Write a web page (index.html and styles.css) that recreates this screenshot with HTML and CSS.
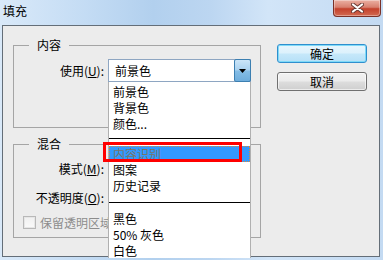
FILE: index.html
```html
<!DOCTYPE html>
<html lang="zh-CN">
<head>
<meta charset="utf-8">
<title>填充</title>
<link rel="stylesheet" href="styles.css">
</head>
<body>
<div class="window">
  <div class="titlebar">
    <span class="title">填充</span>
    <button class="close" aria-label="关闭">
      <svg width="13" height="10" viewBox="0 0 13 10">
        <path d="M2 1.5 L11 8.5 M11 1.5 L2 8.5" stroke="#6b3a33" stroke-width="4" stroke-linecap="round"/>
        <path d="M2 1.5 L11 8.5 M11 1.5 L2 8.5" stroke="#ffffff" stroke-width="2.2" stroke-linecap="round"/>
      </svg>
    </button>
  </div>
  <div class="client">
    <div class="main">
      <fieldset class="group group-content">
        <legend>内容</legend>
        <div class="row">
          <label class="lbl">使用(<u>U</u>):</label>
          <div class="combo">
            <span class="combo-text">前景色</span>
            <span class="combo-btn">
              <svg width="7" height="4" viewBox="0 0 7 4"><path d="M0 0 H7 L3.5 4 Z" fill="#000"/></svg>
            </span>
            <ul class="droplist">
              <li class="item">前景色</li>
              <li class="item">背景色</li>
              <li class="item">颜色...</li>
              <li class="sep sep-first"></li>
              <li class="item item-active">内容识别</li>
              <li class="item">图案</li>
              <li class="item">历史记录</li>
              <li class="sep sep-second"></li>
              <li class="item">黑色</li>
              <li class="item">50% 灰色</li>
              <li class="item">白色</li>
              <li class="mark" aria-hidden="true"></li>
            </ul>
          </div>
        </div>
      </fieldset>
      <fieldset class="group group-blend">
        <legend>混合</legend>
        <div class="rows">
          <div class="row"><label class="lbl">模式(<u>M</u>):</label></div>
          <div class="row"><label class="lbl">不透明度(<u>O</u>):</label></div>
          <div class="check-row"><span class="checkbox"></span><span class="check-lbl">保留透明区域</span></div>
        </div>
      </fieldset>
    </div>
    <div class="buttons">
      <button class="btn btn-default">确定</button>
      <button class="btn">取消</button>
    </div>
  </div>
</div>
</body>
</html>
```
FILE: styles.css
```css
* { box-sizing: border-box; }
html, body { margin: 0; padding: 0; background: #ffffff; }
body {
  font-family: "Noto Sans CJK SC", "Noto Sans", sans-serif;
  font-size: 12px;
  color: #000;
}
.window {
  width: 383px;
  height: 260px;
  display: flex;
  flex-direction: column;
  background: linear-gradient(to right, #d9e9f9 0%, #c4dcf4 22%, #b2d0ee 40%, #bcd6f1 55%, #d2e5f8 70%, #c3daf2 100%);
}
.titlebar {
  height: 25px;
  flex: none;
  display: flex;
  justify-content: space-between;
  align-items: flex-start;
}
.title {
  margin: 3px 0 0 3px;
  line-height: 16px;
  font-size: 12px;
}
.close {
  width: 48px;
  height: 17px;
  margin-right: 2px;
  padding: 0 0 1px;
  border: 1px solid #7a3128;
  border-top: none;
  border-radius: 0 0 4px 4px;
  background: linear-gradient(#ebb0a3 0%, #d8806f 45%, #c4412c 55%, #d26a52 100%);
  box-shadow: inset 0 0 0 1px rgba(255,255,255,0.35);
  display: flex;
  align-items: center;
  justify-content: center;
}
.close svg { display: block; }
.client {
  flex: 1;
  margin: 0 3px 3px 2px;
  border: 1px solid #646e78;
  background: #ececec;
  display: flex;
  align-items: flex-start;
  padding: 12px 0 0 10px;
}
.main {
  width: 248px;
  display: flex;
  flex-direction: column;
  gap: 9px;
}
.group {
  margin: 0;
  min-width: 0;
  border: 1px solid #a5a5a5;
}
.group legend {
  margin-left: 15px;
  padding: 0 8px;
  line-height: 14px;
  font-size: 12px;
}
.group-content { padding: 7px 0 45px 0; }
.group-blend { padding: 7px 0 8px 0; }
.rows {
  display: flex;
  flex-direction: column;
  gap: 7px;
}
.row {
  display: grid;
  grid-template-columns: 90px 143px;
  column-gap: 4px;
  height: 22px;
  align-items: center;
}
.group-content .row { height: 23px; }
.lbl {
  text-align: right;
  line-height: 22px;
  white-space: nowrap;
}
.lbl u { text-decoration: underline; text-underline-offset: 1px; }
.combo {
  position: relative;
  z-index: 5;
  height: 23px;
  border: 1px solid #8ea6c2;
  background: #ffffff;
  display: flex;
  align-items: center;
}
.combo-text {
  padding-left: 6px;
  line-height: 21px;
  flex: 1;
}
.combo-btn {
  width: 17px;
  height: 23px;
  margin: -1px -1px -1px 0;
  border: 1px solid #3c7fb1;
  border-radius: 2px;
  background: linear-gradient(#cbe5f8 0%, #a9d1ef 48%, #84bde6 52%, #6eaddc 100%);
  display: flex;
  align-items: center;
  justify-content: center;
}
.combo-btn svg { display: block; }
.droplist {
  position: absolute;
  top: calc(100% + 1px);
  left: -1px;
  width: 143px;
  height: 176px;
  margin: 0;
  padding: 2px 0 0;
  list-style: none;
  background: #ffffff;
  border-left: 1px solid #b0b0b0;
  border-right: 1px solid #b0b0b0;
}
.item {
  height: 16px;
  line-height: 16px;
  padding-left: 4px;
  white-space: nowrap;
}
.item-active {
  background: #3399ff;
  color: #76766c;
  outline: 1px dotted #d88a40;
  outline-offset: -1px;
}
.sep {
  height: 1px;
  background: #000;
}
.sep-first { margin: 6px 0 7px; }
.sep-second { margin: 8px 0 8px; }
.mark {
  position: absolute;
  left: -6px;
  top: 60px;
  width: 139px;
  height: 20px;
  border: 3px solid #ff0000;
}
.check-row {
  display: flex;
  align-items: center;
  height: 13px;
  padding-left: 9px;
}
.checkbox {
  width: 13px;
  height: 13px;
  border: 1px solid #b8b8b8;
  background: linear-gradient(#f0f0f0, #fafafa);
  box-shadow: inset 0 0 0 1px #e6e6e6;
}
.check-lbl {
  margin-left: 4px;
  color: #8c8c8c;
  line-height: 13px;
  white-space: nowrap;
}
.buttons {
  margin-left: 16px;
  padding-top: 6px;
  display: flex;
  flex-direction: column;
  gap: 9px;
}
.btn {
  width: 90px;
  height: 19px;
  padding: 0;
  font-family: "Noto Sans CJK SC", "Noto Sans", sans-serif;
  font-size: 12px;
  line-height: 17px;
  color: #000;
  border: 1px solid #707070;
  border-radius: 3px;
  background: linear-gradient(#f2f2f2 0%, #ebebeb 48%, #dddddd 52%, #cfcfcf 100%);
  box-shadow: inset 0 0 0 1px rgba(255,255,255,0.6);
}
.btn-default {
  border-color: #2f8fce;
  background: linear-gradient(#e8f6fd 0%, #dcf1fc 48%, #c6e8fa 52%, #b6e0f7 100%);
  box-shadow: inset 0 0 0 1px #7fdaf8;
}
```
